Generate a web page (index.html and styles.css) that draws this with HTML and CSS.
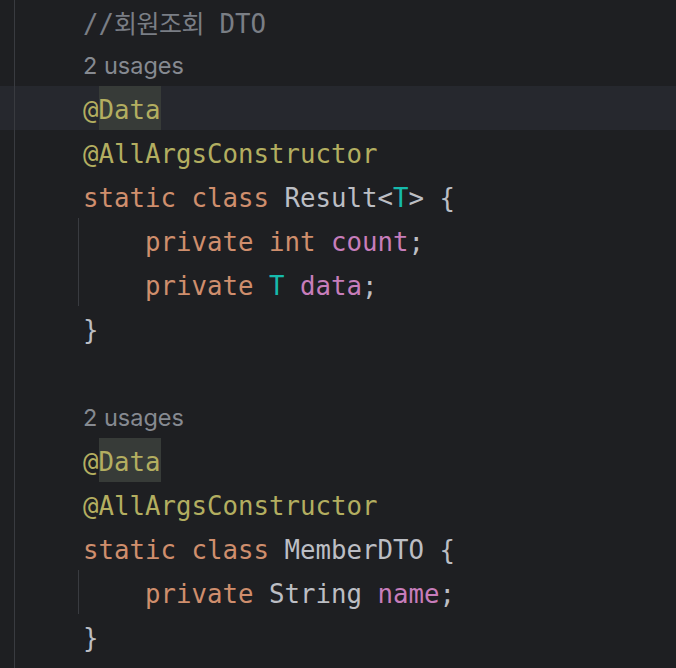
FILE: index.html
```html
<!DOCTYPE html>
<html>
<head>
<meta charset="utf-8">
<link rel="stylesheet" href="styles.css">
</head>
<body>
<div class="editor">
  <div class="line"><span class="cm">//<span class="ko">회원조회</span> DTO</span></div>
  <div class="line hint">2 usages</div>
  <div class="line current"><span class="an">@<span class="hl">Data</span></span></div>
  <div class="line"><span class="an">@AllArgsConstructor</span></div>
  <div class="line"><span class="kw">static class</span> Result&lt;<span class="tp">T</span>&gt; {</div>
  <div class="block">
    <div class="line"><span class="kw">private int</span> <span class="fd">count</span>;</div>
    <div class="line"><span class="kw">private</span> <span class="tp">T</span> <span class="fd">data</span>;</div>
  </div>
  <div class="line">}</div>
  <div class="line"></div>
  <div class="line hint">2 usages</div>
  <div class="line"><span class="an">@<span class="hl">Data</span></span></div>
  <div class="line"><span class="an">@AllArgsConstructor</span></div>
  <div class="line"><span class="kw">static class</span> MemberDTO {</div>
  <div class="block">
    <div class="line"><span class="kw">private</span> String <span class="fd">name</span>;</div>
  </div>
  <div class="line">}</div>
</div>
</body>
</html>
```
FILE: styles.css
```css
html, body {
  margin: 0;
  padding: 0;
  background: #1e1f22;
  height: 100%;
  overflow: hidden;
}
.editor {
  position: relative;
  margin-top: -2px;
  font-family: "DejaVu Sans Mono", "Noto Sans CJK KR", monospace;
  font-size: 25.75px;
  color: #bcbec4;
}
.editor::before {
  content: "";
  position: absolute;
  left: 14px;
  top: 0;
  width: 1px;
  height: 2000px;
  background: #393b40;
  z-index: 2;
}
.line {
  height: 44px;
  line-height: 48px;
  padding-left: 83px;
  white-space: pre;
}
.current {
  background: #26282e;
}
.block {
  margin-left: 78px;
  border-left: 1px solid #393b40;
}
.block .line {
  padding-left: 66px;
}
.hint {
  font-family: Inter, "Noto Sans", sans-serif;
  font-size: 23.5px;
  color: #868a91;
}
.cm { color: #7a7e85; }
.ko {
  font-family: "Noto Sans CJK KR", sans-serif;
  font-size: 25px;
  letter-spacing: -0.5px;
}
.an { color: #b3ae60; }
.hl {
  background: #373b38;
  display: inline-block;
  height: 44px;
}
.kw { color: #cf8e6d; }
.fd { color: #c77dbb; }
.tp { color: #16baac; }
```
